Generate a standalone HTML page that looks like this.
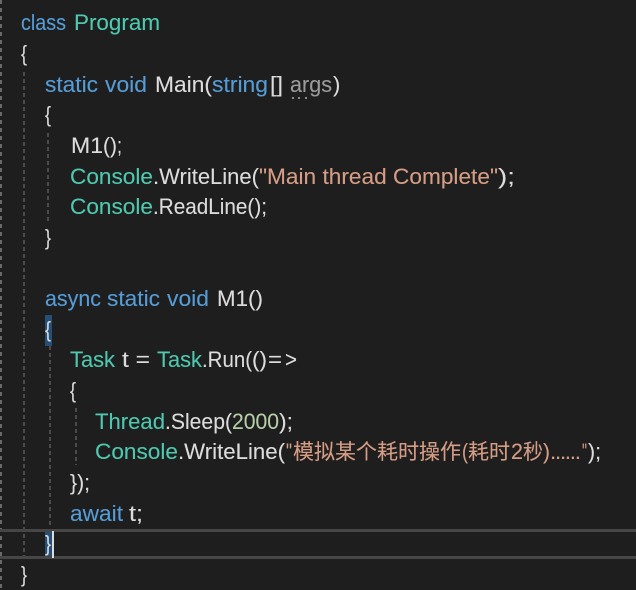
<!DOCTYPE html>
<html><head><meta charset="utf-8"><style>
html,body{margin:0;padding:0;background:#1e1e1e;width:636px;height:590px;overflow:hidden}
svg{display:block}
text{font-family:"Liberation Sans","Noto Sans CJK SC",sans-serif;font-size:22px;color:#dcdcdc;fill:currentColor;stroke:currentColor;stroke-width:.1px}
.k{color:#569cd6}.t{color:#4ec9b0}.s{color:#d69d85}.n{color:#b5cea8}.g{color:#9b9b9b}
.c{font-size:21px}
</style></head><body>
<svg width="636" height="590" xmlns="http://www.w3.org/2000/svg">
<rect width="636" height="590" fill="#1e1e1e"/>
<g stroke="#6a6a6a" stroke-width="2" stroke-dasharray="4 4" fill="none">
<line x1="1" y1="0" x2="1" y2="590"/>
</g>
<g stroke="#5a5a5a" stroke-width="1.5" stroke-dasharray="4 3" fill="none">
<line x1="24" y1="72" x2="24" y2="558"/>
<line x1="48" y1="133" x2="48" y2="222"/>
<line x1="50" y1="346" x2="50" y2="528"/>
<line x1="76" y1="408" x2="76" y2="465"/>
</g>
<rect x="45" y="315" width="7" height="31" fill="#264f78"/>
<rect x="45" y="529" width="7" height="30" fill="#264f78"/>
<rect x="0" y="529" width="636" height="3" fill="#464646"/>
<rect x="0" y="556" width="636" height="3" fill="#464646"/>
<rect x="52" y="531" width="2" height="27" fill="#dcdcdc"/>

<text class="k" x="21" y="30" textLength="45" lengthAdjust="spacingAndGlyphs">class</text>
<text class="t" x="74" y="30" textLength="86" lengthAdjust="spacingAndGlyphs">Program</text>
<text x="21" y="61" textLength="6" lengthAdjust="spacingAndGlyphs">{</text>

<text class="k" x="45" y="92" textLength="53" lengthAdjust="spacingAndGlyphs">static</text>
<text class="k" x="105" y="92" textLength="42" lengthAdjust="spacingAndGlyphs">void</text>
<text x="155" y="92" textLength="57" lengthAdjust="spacingAndGlyphs">Main(</text>
<text class="k" x="212" y="92" textLength="56" lengthAdjust="spacingAndGlyphs">string</text>
<text x="270" y="92" textLength="13" lengthAdjust="spacingAndGlyphs">[]</text>
<text class="g" x="290" y="92" textLength="42" lengthAdjust="spacingAndGlyphs">args</text>
<text x="333" y="92">)</text>
<g fill="#8a8a8a"><rect x="292" y="97" width="2" height="2"/><rect x="298" y="97" width="2" height="2"/><rect x="305" y="97" width="2" height="2"/></g>
<text x="45" y="122" textLength="6" lengthAdjust="spacingAndGlyphs">{</text>

<text x="71" y="153" textLength="32" lengthAdjust="spacingAndGlyphs">M1</text>
<text x="103" y="153" textLength="14" lengthAdjust="spacingAndGlyphs">()</text>
<text x="117" y="153" textLength="5" lengthAdjust="spacingAndGlyphs">;</text>
<text class="t" x="70" y="184" textLength="83" lengthAdjust="spacingAndGlyphs">Console</text>
<text x="153" y="184" textLength="106" lengthAdjust="spacingAndGlyphs">.WriteLine(</text>
<text class="s" x="259" y="184" textLength="239" lengthAdjust="spacingAndGlyphs">"Main thread Complete"</text>
<text x="498" y="184" textLength="17" lengthAdjust="spacingAndGlyphs">);</text>
<text class="t" x="70" y="214" textLength="83" lengthAdjust="spacingAndGlyphs">Console</text>
<text x="153" y="214" textLength="114" lengthAdjust="spacingAndGlyphs">.ReadLine();</text>
<text x="45" y="245" textLength="6" lengthAdjust="spacingAndGlyphs">}</text>

<text class="k" x="45" y="306" textLength="56" lengthAdjust="spacingAndGlyphs">async</text>
<text class="k" x="107" y="306" textLength="53" lengthAdjust="spacingAndGlyphs">static</text>
<text class="k" x="167" y="306" textLength="42" lengthAdjust="spacingAndGlyphs">void</text>
<text x="217" y="306" textLength="31" lengthAdjust="spacingAndGlyphs">M1</text>
<text x="248" y="306" textLength="15" lengthAdjust="spacingAndGlyphs">()</text>
<text x="45" y="337" textLength="6" lengthAdjust="spacingAndGlyphs">{</text>

<text class="t" x="70" y="367" textLength="45" lengthAdjust="spacingAndGlyphs">Task</text>
<text x="122" y="367" textLength="28" lengthAdjust="spacingAndGlyphs">t =</text>
<text class="t" x="157" y="367" textLength="45" lengthAdjust="spacingAndGlyphs">Task</text>
<text x="202" y="367" textLength="50" lengthAdjust="spacingAndGlyphs">.Run(</text>
<text x="252" y="367" textLength="15" lengthAdjust="spacingAndGlyphs">()</text>
<text x="268" y="367" textLength="14" lengthAdjust="spacingAndGlyphs">=</text>
<text x="285" y="367" textLength="12" lengthAdjust="spacingAndGlyphs">&gt;</text>
<text x="70" y="398" textLength="6" lengthAdjust="spacingAndGlyphs">{</text>

<text class="t" x="95" y="429" textLength="70" lengthAdjust="spacingAndGlyphs">Thread</text>
<text x="165" y="429" textLength="67" lengthAdjust="spacingAndGlyphs">.Sleep(</text>
<text class="n" x="232" y="429" textLength="47" lengthAdjust="spacingAndGlyphs">2000</text>
<text x="279" y="429" textLength="14" lengthAdjust="spacingAndGlyphs">);</text>
<text class="t" x="95" y="459" textLength="83" lengthAdjust="spacingAndGlyphs">Console</text>
<text x="178" y="459" textLength="107" lengthAdjust="spacingAndGlyphs">.WriteLine(</text>
<text class="s" x="286" y="459" textLength="6" lengthAdjust="spacingAndGlyphs">"</text>
<text class="s c" x="293" y="459" textLength="168" lengthAdjust="spacingAndGlyphs">模拟某个耗时操作</text>
<text class="s" x="462" y="459" textLength="6" lengthAdjust="spacingAndGlyphs">(</text>
<text class="s c" x="468" y="459" textLength="42" lengthAdjust="spacingAndGlyphs">耗时</text>
<text class="s" x="511" y="459" textLength="12" lengthAdjust="spacingAndGlyphs">2</text>
<text class="s c" x="523" y="459" textLength="20" lengthAdjust="spacingAndGlyphs">秒</text>
<text class="s" x="543" y="459" textLength="7" lengthAdjust="spacingAndGlyphs">)</text>
<text class="s" x="550" y="459" textLength="31" lengthAdjust="spacing">......</text>
<text class="s" x="582" y="459" textLength="5" lengthAdjust="spacingAndGlyphs">"</text>
<text x="588" y="459" textLength="13" lengthAdjust="spacingAndGlyphs">);</text>

<text x="70" y="490" textLength="20" lengthAdjust="spacingAndGlyphs">});</text>
<text class="k" x="70" y="521" textLength="53" lengthAdjust="spacingAndGlyphs">await</text>
<text x="129" y="521" textLength="14" lengthAdjust="spacingAndGlyphs">t;</text>
<text x="45" y="551" textLength="6" lengthAdjust="spacingAndGlyphs">}</text>
<text x="21" y="582" textLength="6" lengthAdjust="spacingAndGlyphs">}</text>
</svg>
</body></html>
